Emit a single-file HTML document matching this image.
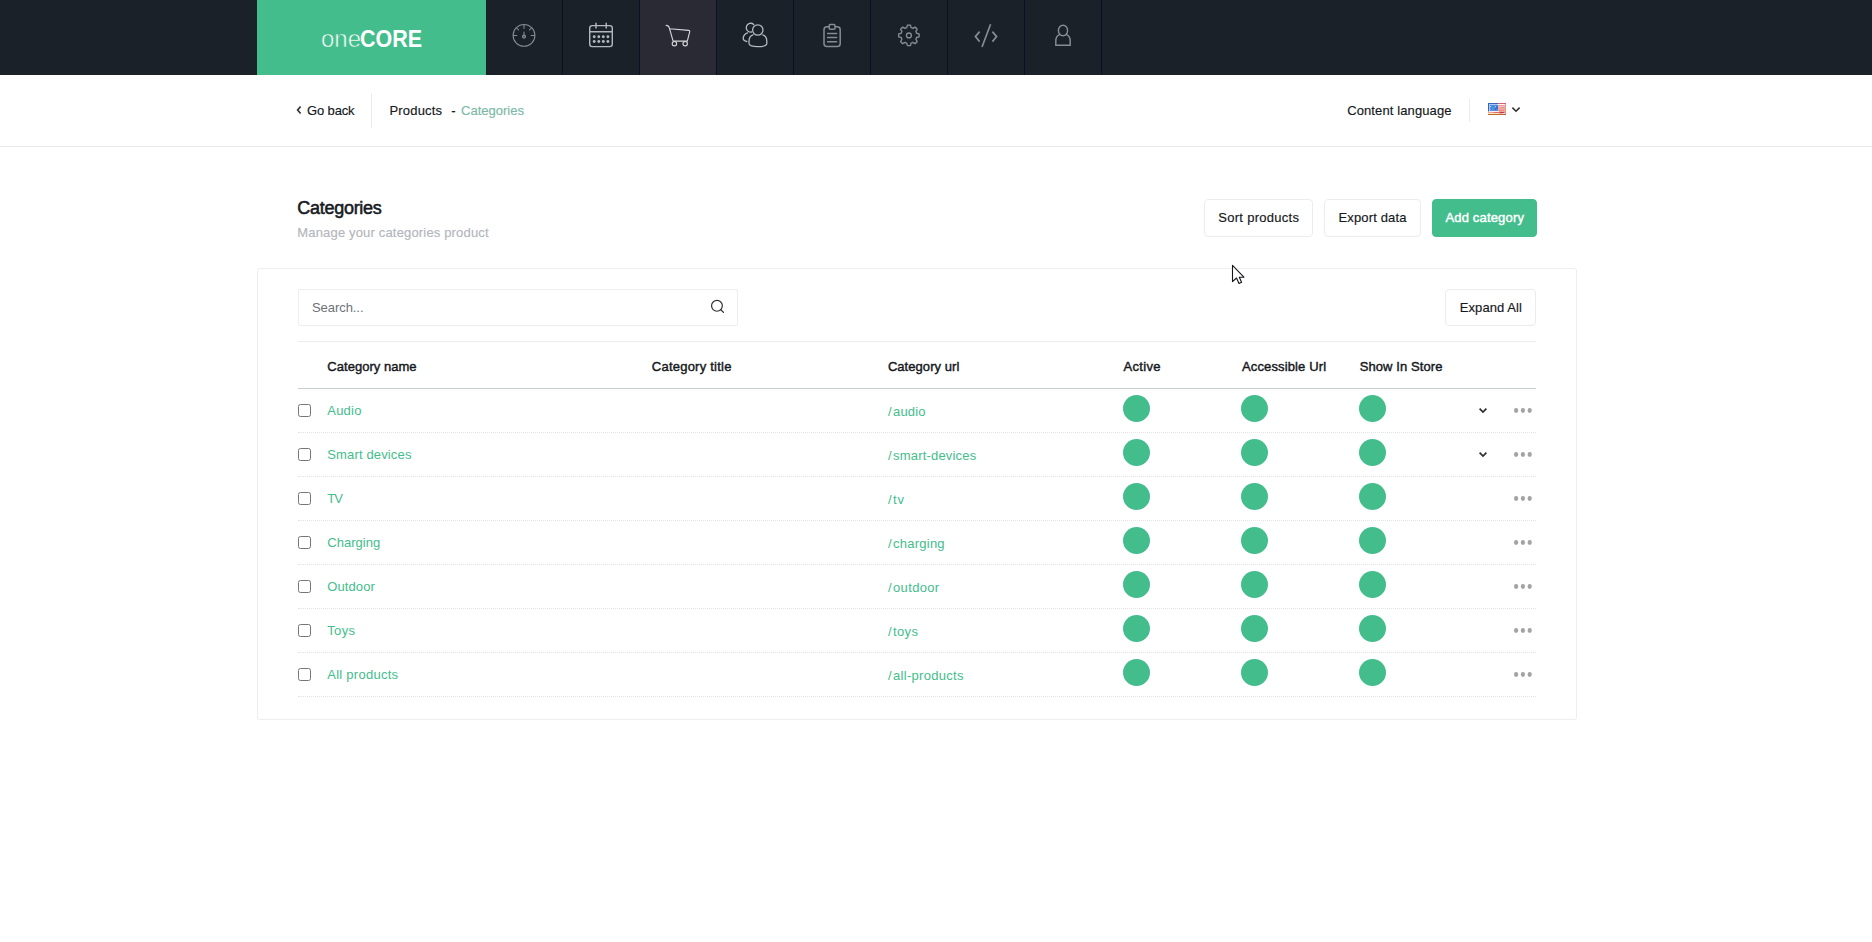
<!DOCTYPE html>
<html lang="en">
<head>
<meta charset="utf-8">
<title>oneCORE - Categories</title>
<style>
*{box-sizing:border-box;margin:0;padding:0}
html,body{width:1872px;height:942px;overflow:hidden;background:#fff}
body{font-family:"Liberation Sans",sans-serif;font-size:13px;color:#1b1f28;position:relative}
.abs{position:absolute}
.t{position:absolute;white-space:nowrap;font-weight:normal;text-decoration:none;display:block}
#nav{position:absolute;left:0;top:0;width:1872px;height:75px;background:#1b2129}
#logo{position:absolute;left:257px;top:0;width:229px;height:75px;background:#43bd8c}
#logo span{position:absolute;top:24.9px;font-size:24.5px;line-height:28px;color:#fff;white-space:nowrap;transform-origin:0 50%}
#l1{left:64.3px;-webkit-text-stroke:.6px #43bd8c;transform:scaleX(.98)}
#l2{left:103.3px;font-weight:bold;transform:scaleX(.875)}
.ni{position:absolute;top:0;width:77px;height:75px;border-right:1px solid #0b1124}
.ni.act{background:#292a33}
.ni svg{position:absolute;left:0;top:0}
#bar{position:absolute;left:0;top:75px;width:1872px;height:72px;border-bottom:1px solid #e9e9e9;background:#fff}
.vl{position:absolute;width:1px;background:#ebebeb}
.btn{position:absolute;border:1px solid #ececec;border-radius:4px;background:#fff}
.btn.g{background:#43bd8c;border-color:#43bd8c}
#card{position:absolute;left:257px;top:268px;width:1320px;height:452px;border:1px solid #eeeeee;border-radius:2.5px;background:#fff}
.hl{position:absolute;left:298px;width:1238px;height:0}
.cb{position:absolute;left:298px;width:13px;height:13px;border:1px solid #767676;border-radius:2.5px;background:#fff}
.dot{position:absolute;width:27px;height:27px;border-radius:50%;background:#43bd8c}
</style>
</head>
<body>
<div id="nav">
<div id="logo"><span id="l1">one</span><span id="l2">CORE</span></div>
<div class="ni" style="left:486px"><svg width="77" height="75" viewBox="486 0 77 75" fill="none" stroke-linecap="round" stroke-linejoin="round"><g stroke="#878c94" stroke-width="1.05"><circle cx="524" cy="35.4" r="10.9"/>
<path d="M524 24.8v3.6M513.4 35.4h3.4M534.6 35.4h-3.4M516.6 28l1.9 1.9M531.4 28l-1.9 1.9M524 32v3"/>
<circle cx="524" cy="36.6" r="1.5" fill="#50555d"/></g></svg></div><div class="ni" style="left:563px"><svg width="77" height="75" viewBox="563 0 77 75" fill="none" stroke-linecap="round" stroke-linejoin="round"><g stroke="#b4b8be" stroke-width="1.4"><rect x="589.7" y="25.6" width="22.6" height="21" rx="2.6"/>
<path d="M589.7 31.8h22.6M596 23.2v4.8M606.2 23.2v4.8"/></g>
<g fill="#b4b8be" stroke="none"><circle cx="594.2" cy="36.7" r="1.45"/><circle cx="598.8" cy="36.7" r="1.45"/><circle cx="603.3" cy="36.7" r="1.45"/><circle cx="607.9" cy="36.7" r="1.45"/><circle cx="594.2" cy="41.5" r="1.45"/><circle cx="598.8" cy="41.5" r="1.45"/><circle cx="603.3" cy="41.5" r="1.45"/><circle cx="607.9" cy="41.5" r="1.45"/></g></svg></div><div class="ni act" style="left:640px"><svg width="77" height="75" viewBox="640 0 77 75" fill="none" stroke-linecap="round" stroke-linejoin="round"><g stroke="#d3d5d8" stroke-width="1.15"><path d="M666.2 25.4c1.8 0 2.6.6 3.2 2.8l3.7 13h14.2l2.4-9.4c.2-.9-.2-1.3-1-1.4l-18.9-1.7"/>
<circle cx="674.4" cy="43.7" r="2.2"/><circle cx="685.2" cy="43.7" r="2.2"/></g></svg></div><div class="ni" style="left:717px"><svg width="77" height="75" viewBox="717 0 77 75" fill="none" stroke-linecap="round" stroke-linejoin="round"><g stroke="#b6b9bf" stroke-width="1.3"><circle cx="757.8" cy="30" r="5.2"/>
<path d="M753 34.800C750.400 35.800 749 38 749 41V43.300C749 45.500 753 46.700 757.900 46.700S766.800 45.500 766.800 43.300V41C766.800 38 765.400 35.800 762.800 34.800"/>
<path d="M751.500 32A4.400 4.400 0 1 1 753.700 24.500M747.600 32.800C744.600 33.800 743.200 36 743.200 38.600C743.200 40.200 744.400 41.100 746.800 41.500"/></g></svg></div><div class="ni" style="left:794px"><svg width="77" height="75" viewBox="794 0 77 75" fill="none" stroke-linecap="round" stroke-linejoin="round"><g stroke="#878c94" stroke-width="1.5"><rect x="824" y="26.8" width="16.200" height="19.600" rx="3"/>
<rect x="829.200" y="24.600" width="5.800" height="4.600" rx="1" fill="#1b2129"/>
<path d="M827.600 33.400h9M827.600 37.500h9M827.600 41.700h9"/></g></svg></div><div class="ni" style="left:871px"><svg width="77" height="75" viewBox="871 0 77 75" fill="none" stroke-linecap="round" stroke-linejoin="round"><g stroke="#878c94" stroke-width="1.35"><path d="M907.36 25.22A10.3 10.3 0 0 1 910.44 25.22L911.03 27.69A8.0 8.0 0 0 1 912.84 28.44L915.01 27.11A10.3 10.3 0 0 1 917.19 29.29L915.86 31.46A8.0 8.0 0 0 1 916.61 33.27L919.08 33.86A10.3 10.3 0 0 1 919.08 36.94L916.61 37.53A8.0 8.0 0 0 1 915.86 39.34L917.19 41.51A10.3 10.3 0 0 1 915.01 43.69L912.84 42.36A8.0 8.0 0 0 1 911.03 43.11L910.44 45.58A10.3 10.3 0 0 1 907.36 45.58L906.77 43.11A8.0 8.0 0 0 1 904.96 42.36L902.79 43.69A10.3 10.3 0 0 1 900.61 41.51L901.94 39.34A8.0 8.0 0 0 1 901.19 37.53L898.72 36.94A10.3 10.3 0 0 1 898.72 33.86L901.19 33.27A8.0 8.0 0 0 1 901.94 31.46L900.61 29.29A10.3 10.3 0 0 1 902.79 27.11L904.96 28.44A8.0 8.0 0 0 1 906.77 27.69Z"/><circle cx="908.9" cy="35.4" r="2.45"/></g></svg></div><div class="ni" style="left:948px"><svg width="77" height="75" viewBox="948 0 77 75" fill="none" stroke-linecap="round" stroke-linejoin="round"><g stroke="#878c94" stroke-width="1.7" stroke-linecap="butt" stroke-linejoin="miter"><path d="M979.6 31.6L975.4 36.6L979.6 41.600M990.6 24.300L982 47M992.400 31.600L996.600 36.600L992.400 41.600"/></g></svg></div><div class="ni" style="left:1025px"><svg width="77" height="75" viewBox="1025 0 77 75" fill="none" stroke-linecap="round" stroke-linejoin="round"><g stroke="#878c94" stroke-width="1.45"><ellipse cx="1063" cy="30.500" rx="4.600" ry="5.200"/>
<path d="M1059.600 34.600c-2.600 1-3.800 3.200-3.800 6.400v4.200h14.400v-4.200c0-3.200-1.200-5.400-3.800-6.400" stroke-linejoin="miter"/></g></svg></div>
</div>
<div id="bar"></div>
<svg class="abs" style="left:295px;top:104px" width="8" height="12" viewBox="0 0 8 12"><path d="M5.600 2.400L2.600 6L5.600 9.600" fill="none" stroke="#2a2c30" stroke-width="1.600"/></svg>
<div class="vl" style="left:371px;top:93px;height:35px"></div>
<div class="vl" style="left:1469px;top:99px;height:23px"></div>
<svg class="abs" style="left:1488px;top:103px" width="18" height="12" viewBox="0 0 18 12" shape-rendering="crispEdges"><rect x="0" y="0" width="10" height="1" fill="#4262ba"/><rect x="10" y="0" width="8" height="1" fill="#d4626e"/><rect x="0" y="1" width="1" height="1" fill="#4262ba"/><rect x="1" y="1" width="9" height="1" fill="#a9cbf3"/><rect x="10" y="1" width="7" height="1" fill="#fdf5f0"/><rect x="17" y="1" width="1" height="1" fill="#d99a98"/><rect x="0" y="2" width="1" height="1" fill="#4262ba"/><rect x="1" y="2" width="1" height="1" fill="#a9cbf3"/><rect x="2" y="2" width="8" height="1" fill="#4b8de0"/><rect x="10" y="2" width="7" height="1" fill="#ee9c90"/><rect x="17" y="2" width="1" height="1" fill="#d99a98"/><rect x="0" y="3" width="1" height="1" fill="#4262ba"/><rect x="1" y="3" width="1" height="1" fill="#a9cbf3"/><rect x="2" y="3" width="1" height="1" fill="#a8d8f8"/><rect x="3" y="3" width="4" height="1" fill="#4b8de0"/><rect x="7" y="3" width="1" height="1" fill="#9ccff5"/><rect x="8" y="3" width="2" height="1" fill="#3f78d8"/><rect x="10" y="3" width="7" height="1" fill="#f8bccb"/><rect x="17" y="3" width="1" height="1" fill="#d99a98"/><rect x="0" y="4" width="1" height="1" fill="#4262ba"/><rect x="1" y="4" width="1" height="1" fill="#a9cbf3"/><rect x="2" y="4" width="5" height="1" fill="#4b8de0"/><rect x="7" y="4" width="1" height="1" fill="#5b9be6"/><rect x="8" y="4" width="2" height="1" fill="#3a6fd2"/><rect x="10" y="4" width="3" height="1" fill="#f2a797"/><rect x="13" y="4" width="3" height="1" fill="#dd9a90"/><rect x="16" y="4" width="1" height="1" fill="#f2a797"/><rect x="17" y="4" width="1" height="1" fill="#d99a98"/><rect x="0" y="5" width="1" height="1" fill="#4262ba"/><rect x="1" y="5" width="1" height="1" fill="#a9cbf3"/><rect x="2" y="5" width="5" height="1" fill="#4b8de0"/><rect x="7" y="5" width="1" height="1" fill="#3f6ed0"/><rect x="8" y="5" width="2" height="1" fill="#3b74d6"/><rect x="10" y="5" width="7" height="1" fill="#f2a797"/><rect x="17" y="5" width="1" height="1" fill="#d99a98"/><rect x="0" y="6" width="1" height="1" fill="#4262ba"/><rect x="1" y="6" width="1" height="1" fill="#a9cbf3"/><rect x="2" y="6" width="1" height="1" fill="#6aa6ea"/><rect x="3" y="6" width="4" height="1" fill="#4b8de0"/><rect x="7" y="6" width="1" height="1" fill="#3560c4"/><rect x="8" y="6" width="2" height="1" fill="#4a86dc"/><rect x="10" y="6" width="7" height="1" fill="#f2a797"/><rect x="17" y="6" width="1" height="1" fill="#d99a98"/><rect x="0" y="7" width="1" height="1" fill="#4262ba"/><rect x="1" y="7" width="1" height="1" fill="#a9cbf3"/><rect x="2" y="7" width="8" height="1" fill="#5a90e2"/><rect x="10" y="7" width="1" height="1" fill="#e890b0"/><rect x="11" y="7" width="5" height="1" fill="#e48a90"/><rect x="16" y="7" width="1" height="1" fill="#f2a797"/><rect x="17" y="7" width="1" height="1" fill="#d99a98"/><rect x="0" y="8" width="1" height="1" fill="#b7a4d6"/><rect x="1" y="8" width="10" height="1" fill="#f6eef8"/><rect x="11" y="8" width="6" height="1" fill="#f2a797"/><rect x="17" y="8" width="1" height="1" fill="#d99a98"/><rect x="0" y="9" width="4" height="1" fill="#f0a0a8"/><rect x="4" y="9" width="2" height="1" fill="#e89a80"/><rect x="6" y="9" width="6" height="1" fill="#d66c7c"/><rect x="12" y="9" width="4" height="1" fill="#c23a3c"/><rect x="16" y="9" width="1" height="1" fill="#dd8a70"/><rect x="17" y="9" width="1" height="1" fill="#d99a98"/><rect x="0" y="10" width="11" height="1" fill="#fbe6b0"/><rect x="11" y="10" width="4" height="1" fill="#f9a8c4"/><rect x="15" y="10" width="2" height="1" fill="#fbe8c8"/><rect x="17" y="10" width="1" height="1" fill="#d99a98"/><rect x="0" y="11" width="16" height="1" fill="#c26a2a"/><rect x="16" y="11" width="2" height="1" fill="#8a6a5c"/></svg>
<svg class="abs" style="left:1510px;top:104px" width="12" height="12" viewBox="0 0 12 12"><path d="M2.400 3.600L6 7.200L9.600 3.600" fill="none" stroke="#333" stroke-width="1.6"/></svg>
<div class="btn" style="left:1204px;top:199px;width:109px;height:38px"></div>
<div class="btn" style="left:1324px;top:199px;width:97px;height:38px"></div>
<div class="btn g" style="left:1432px;top:199px;width:105px;height:38px"></div>
<div id="card"></div>
<div class="btn" style="left:298px;top:289px;width:440px;height:37px;border-radius:2px;border-color:#eee"></div>
<svg class="abs" style="left:709px;top:299px" width="16" height="16" viewBox="0 0 16 16"><circle cx="7.950" cy="6.850" r="5.400" fill="none" stroke="#2f3238" stroke-width="1.200"/><path d="M11.800 10.700L14.500 13.400" stroke="#2f3238" stroke-width="1.300" stroke-linecap="round"/></svg>
<div class="btn" style="left:1445px;top:289px;width:91px;height:37px"></div>
<div class="hl" style="top:341px;border-top:1px solid #eee"></div>
<div class="hl" style="top:388px;border-top:1px solid #c6d1d1"></div>
<div class="cb" style="top:403.5px"></div>
<div class="dot" style="left:1122.5px;top:394.5px"></div>
<div class="dot" style="left:1240.5px;top:394.5px"></div>
<div class="dot" style="left:1358.5px;top:394.5px"></div>
<svg class="abs" style="left:1477px;top:404px" width="12" height="12" viewBox="0 0 12 12"><path d="M2.6 4.7L6 8.100L9.400 4.700" fill="none" stroke="#2c2e31" stroke-width="1.7"/></svg>
<svg class="abs" style="left:1513px;top:406px" width="20" height="9" viewBox="0 0 20 9" fill="#a3a3a3"><ellipse cx="3.100" cy="4.500" rx="2.100" ry="2.400"/><ellipse cx="9.900" cy="4.500" rx="2.100" ry="2.400"/><ellipse cx="16.700" cy="4.500" rx="2.100" ry="2.400"/></svg>
<div class="hl" style="top:432px;border-top:1px dotted #e3e3e3"></div>
<div class="cb" style="top:447.5px"></div>
<div class="dot" style="left:1122.5px;top:438.5px"></div>
<div class="dot" style="left:1240.5px;top:438.5px"></div>
<div class="dot" style="left:1358.5px;top:438.5px"></div>
<svg class="abs" style="left:1477px;top:448px" width="12" height="12" viewBox="0 0 12 12"><path d="M2.6 4.7L6 8.100L9.400 4.700" fill="none" stroke="#2c2e31" stroke-width="1.7"/></svg>
<svg class="abs" style="left:1513px;top:450px" width="20" height="9" viewBox="0 0 20 9" fill="#a3a3a3"><ellipse cx="3.100" cy="4.500" rx="2.100" ry="2.400"/><ellipse cx="9.900" cy="4.500" rx="2.100" ry="2.400"/><ellipse cx="16.700" cy="4.500" rx="2.100" ry="2.400"/></svg>
<div class="hl" style="top:476px;border-top:1px dotted #e3e3e3"></div>
<div class="cb" style="top:491.5px"></div>
<div class="dot" style="left:1122.5px;top:482.5px"></div>
<div class="dot" style="left:1240.5px;top:482.5px"></div>
<div class="dot" style="left:1358.5px;top:482.5px"></div>
<svg class="abs" style="left:1513px;top:494px" width="20" height="9" viewBox="0 0 20 9" fill="#a3a3a3"><ellipse cx="3.100" cy="4.500" rx="2.100" ry="2.400"/><ellipse cx="9.900" cy="4.500" rx="2.100" ry="2.400"/><ellipse cx="16.700" cy="4.500" rx="2.100" ry="2.400"/></svg>
<div class="hl" style="top:520px;border-top:1px dotted #e3e3e3"></div>
<div class="cb" style="top:535.5px"></div>
<div class="dot" style="left:1122.5px;top:526.5px"></div>
<div class="dot" style="left:1240.5px;top:526.5px"></div>
<div class="dot" style="left:1358.5px;top:526.5px"></div>
<svg class="abs" style="left:1513px;top:538px" width="20" height="9" viewBox="0 0 20 9" fill="#a3a3a3"><ellipse cx="3.100" cy="4.500" rx="2.100" ry="2.400"/><ellipse cx="9.900" cy="4.500" rx="2.100" ry="2.400"/><ellipse cx="16.700" cy="4.500" rx="2.100" ry="2.400"/></svg>
<div class="hl" style="top:564px;border-top:1px dotted #e3e3e3"></div>
<div class="cb" style="top:579.5px"></div>
<div class="dot" style="left:1122.5px;top:570.5px"></div>
<div class="dot" style="left:1240.5px;top:570.5px"></div>
<div class="dot" style="left:1358.5px;top:570.5px"></div>
<svg class="abs" style="left:1513px;top:582px" width="20" height="9" viewBox="0 0 20 9" fill="#a3a3a3"><ellipse cx="3.100" cy="4.500" rx="2.100" ry="2.400"/><ellipse cx="9.900" cy="4.500" rx="2.100" ry="2.400"/><ellipse cx="16.700" cy="4.500" rx="2.100" ry="2.400"/></svg>
<div class="hl" style="top:608px;border-top:1px dotted #e3e3e3"></div>
<div class="cb" style="top:623.5px"></div>
<div class="dot" style="left:1122.5px;top:614.5px"></div>
<div class="dot" style="left:1240.5px;top:614.5px"></div>
<div class="dot" style="left:1358.5px;top:614.5px"></div>
<svg class="abs" style="left:1513px;top:626px" width="20" height="9" viewBox="0 0 20 9" fill="#a3a3a3"><ellipse cx="3.100" cy="4.500" rx="2.100" ry="2.400"/><ellipse cx="9.900" cy="4.500" rx="2.100" ry="2.400"/><ellipse cx="16.700" cy="4.500" rx="2.100" ry="2.400"/></svg>
<div class="hl" style="top:652px;border-top:1px dotted #e3e3e3"></div>
<div class="cb" style="top:667.5px"></div>
<div class="dot" style="left:1122.5px;top:658.5px"></div>
<div class="dot" style="left:1240.5px;top:658.5px"></div>
<div class="dot" style="left:1358.5px;top:658.5px"></div>
<svg class="abs" style="left:1513px;top:670px" width="20" height="9" viewBox="0 0 20 9" fill="#a3a3a3"><ellipse cx="3.100" cy="4.500" rx="2.100" ry="2.400"/><ellipse cx="9.900" cy="4.500" rx="2.100" ry="2.400"/><ellipse cx="16.700" cy="4.500" rx="2.100" ry="2.400"/></svg>
<div class="hl" style="top:696px;border-top:1px dotted #e3e3e3"></div>
<a class="t" id="t0" style="left:307.00px;top:102.50px;font-size:13px;line-height:16px;color:#151820;-webkit-text-stroke:0.16px #151820;letter-spacing:-0.137px;">Go back</a>
<a class="t" id="t1" style="left:389.50px;top:102.50px;font-size:13px;line-height:16px;color:#151820;-webkit-text-stroke:0.16px #151820;letter-spacing:0.184px;">Products</a>
<div class="t" id="t2" style="left:451.30px;top:102.50px;font-size:13px;line-height:16px;color:#151820;-webkit-text-stroke:0.16px #151820;">-</div>
<div class="t" id="t3" style="left:461.00px;top:102.50px;font-size:13px;line-height:16px;color:#7db8a6;-webkit-text-stroke:0.16px #7db8a6;letter-spacing:0.014px;">Categories</div>
<div class="t" id="t4" style="left:1347.20px;top:102.50px;font-size:13px;line-height:16px;color:#151820;-webkit-text-stroke:0.16px #151820;letter-spacing:0.110px;">Content language</div>
<h1 class="t" id="t5" style="left:297.30px;top:196.76px;font-size:18px;line-height:22px;color:#161a22;-webkit-text-stroke:0.55px #161a22;letter-spacing:-0.283px;">Categories</h1>
<div class="t" id="t6" style="left:297.30px;top:224.50px;font-size:13px;line-height:16px;color:#b3b6bd;-webkit-text-stroke:0.16px #b3b6bd;letter-spacing:0.167px;">Manage your categories product</div>
<div class="t" id="t7" style="left:1218.30px;top:209.50px;font-size:13px;line-height:16px;color:#151820;-webkit-text-stroke:0.16px #151820;letter-spacing:0.281px;">Sort products</div>
<div class="t" id="t8" style="left:1338.50px;top:209.50px;font-size:13px;line-height:16px;color:#151820;-webkit-text-stroke:0.16px #151820;letter-spacing:0.150px;">Export data</div>
<div class="t" id="t9" style="left:1445.40px;top:209.50px;font-size:13px;line-height:16px;color:#fff;-webkit-text-stroke:0.42px #fff;letter-spacing:0.172px;">Add category</div>
<div class="t" id="t10" style="left:312.00px;top:299.50px;font-size:13px;line-height:16px;color:#6e727a;letter-spacing:-0.066px;">Search...</div>
<div class="t" id="t11" style="left:1459.80px;top:299.50px;font-size:13px;line-height:16px;color:#151820;-webkit-text-stroke:0.16px #151820;letter-spacing:0.062px;">Expand All</div>
<div class="t" id="t12" style="left:327.30px;top:358.50px;font-size:13px;line-height:16px;color:#151820;-webkit-text-stroke:0.42px #151820;letter-spacing:0.034px;">Category name</div>
<div class="t" id="t13" style="left:651.80px;top:358.50px;font-size:13px;line-height:16px;color:#151820;-webkit-text-stroke:0.42px #151820;letter-spacing:0.231px;">Category title</div>
<div class="t" id="t14" style="left:887.90px;top:358.50px;font-size:13px;line-height:16px;color:#151820;-webkit-text-stroke:0.42px #151820;letter-spacing:0.053px;">Category url</div>
<div class="t" id="t15" style="left:1123.60px;top:358.50px;font-size:13px;line-height:16px;color:#151820;-webkit-text-stroke:0.42px #151820;letter-spacing:0.299px;">Active</div>
<div class="t" id="t16" style="left:1242.00px;top:358.50px;font-size:13px;line-height:16px;color:#151820;-webkit-text-stroke:0.42px #151820;letter-spacing:0.134px;">Accessible Url</div>
<div class="t" id="t17" style="left:1359.70px;top:358.50px;font-size:13px;line-height:16px;color:#151820;-webkit-text-stroke:0.42px #151820;letter-spacing:0.087px;">Show In Store</div>
<a class="t" id="t18" style="left:327.30px;top:402.50px;font-size:13px;line-height:16px;color:#43bd8c;letter-spacing:0.213px;">Audio</a>
<a class="t" id="t19" style="left:888.00px;top:403.50px;font-size:13px;line-height:16px;color:#43bd8c;letter-spacing:0.168px;"><span style="letter-spacing:1.4px">/</span>audio</a>
<a class="t" id="t20" style="left:327.30px;top:446.50px;font-size:13px;line-height:16px;color:#43bd8c;letter-spacing:0.144px;">Smart devices</a>
<a class="t" id="t21" style="left:888.00px;top:447.50px;font-size:13px;line-height:16px;color:#43bd8c;letter-spacing:0.189px;"><span style="letter-spacing:1.4px">/</span>smart-devices</a>
<a class="t" id="t22" style="left:327.30px;top:490.50px;font-size:13px;line-height:16px;color:#43bd8c;letter-spacing:-1.025px;">TV</a>
<a class="t" id="t23" style="left:888.00px;top:491.50px;font-size:13px;line-height:16px;color:#43bd8c;letter-spacing:0.759px;"><span style="letter-spacing:1.4px">/</span>tv</a>
<a class="t" id="t24" style="left:327.30px;top:534.50px;font-size:13px;line-height:16px;color:#43bd8c;letter-spacing:0.019px;">Charging</a>
<a class="t" id="t25" style="left:888.00px;top:535.50px;font-size:13px;line-height:16px;color:#43bd8c;letter-spacing:0.244px;"><span style="letter-spacing:1.4px">/</span>charging</a>
<a class="t" id="t26" style="left:327.30px;top:578.50px;font-size:13px;line-height:16px;color:#43bd8c;letter-spacing:0.086px;">Outdoor</a>
<a class="t" id="t27" style="left:888.00px;top:579.50px;font-size:13px;line-height:16px;color:#43bd8c;letter-spacing:0.348px;"><span style="letter-spacing:1.4px">/</span>outdoor</a>
<a class="t" id="t28" style="left:327.30px;top:622.50px;font-size:13px;line-height:16px;color:#43bd8c;letter-spacing:0.322px;">Toys</a>
<a class="t" id="t29" style="left:888.00px;top:623.50px;font-size:13px;line-height:16px;color:#43bd8c;letter-spacing:0.347px;"><span style="letter-spacing:1.4px">/</span>toys</a>
<a class="t" id="t30" style="left:327.30px;top:666.50px;font-size:13px;line-height:16px;color:#43bd8c;letter-spacing:0.253px;">All products</a>
<a class="t" id="t31" style="left:888.00px;top:667.50px;font-size:13px;line-height:16px;color:#43bd8c;letter-spacing:0.289px;"><span style="letter-spacing:1.4px">/</span>all-products</a>
<svg class="abs" style="left:1231px;top:264px" width="15" height="22" viewBox="0 0 15 22"><path d="M1.500 1.300V17.600L5.500 14L8 19.500L10.600 18.300L8.300 13.200H12.900Z" fill="#fff" stroke="#14161c" stroke-width="1.100" stroke-linejoin="round"/></svg>
</body>
</html>
